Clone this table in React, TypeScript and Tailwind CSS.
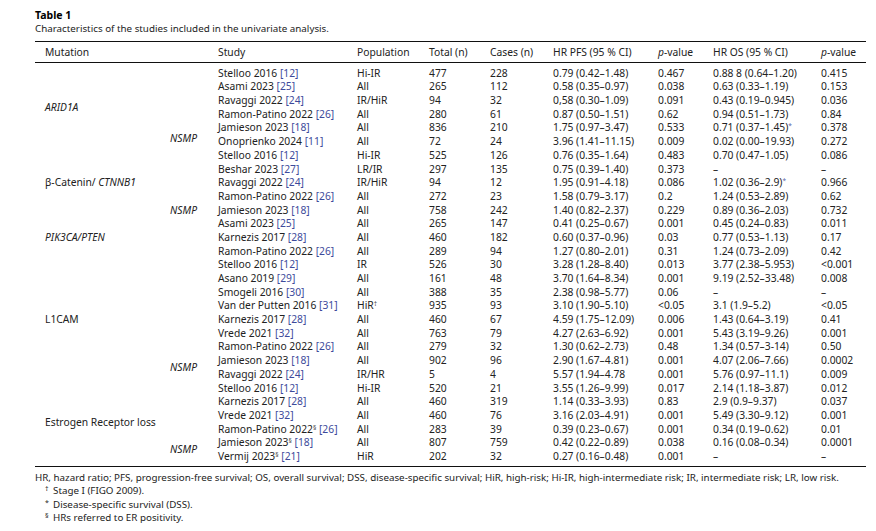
import React from "react";

type Row = {
  s: string;
  sec?: boolean;
  ref: string;
  pop: string;
  dag?: boolean;
  tot: string;
  cas: string;
  pfs: string;
  p1: string;
  os: string;
  star?: boolean;
  p2: string;
};

const rows: Row[] = [
  { s: "Stelloo 2016", ref: "12", pop: "Hi-IR", tot: "477", cas: "228", pfs: "0.79 (0.42–1.48)", p1: "0.467", os: "0.88 8 (0.64–1.20)", p2: "0.415" },
  { s: "Asami 2023", ref: "25", pop: "All", tot: "265", cas: "112", pfs: "0.58 (0.35–0.97)", p1: "0.038", os: "0.63 (0.33–1.19)", p2: "0.153" },
  { s: "Ravaggi 2022", ref: "24", pop: "IR/HiR", tot: "94", cas: "32", pfs: "0,58 (0.30–1.09)", p1: "0.091", os: "0.43 (0.19–0.945)", p2: "0.036" },
  { s: "Ramon-Patino 2022", ref: "26", pop: "All", tot: "280", cas: "61", pfs: "0.87 (0.50–1.51)", p1: "0.62", os: "0.94 (0.51–1.73)", p2: "0.84" },
  { s: "Jamieson 2023", ref: "18", pop: "All", tot: "836", cas: "210", pfs: "1.75 (0.97–3.47)", p1: "0.533", os: "0.71 (0.37–1.45)", star: true, p2: "0.378" },
  { s: "Onoprienko 2024", ref: "11", pop: "All", tot: "72", cas: "24", pfs: "3.96 (1.41–11.15)", p1: "0.009", os: "0.02 (0.00–19.93)", p2: "0.272" },
  { s: "Stelloo 2016", ref: "12", pop: "Hi-IR", tot: "525", cas: "126", pfs: "0.76 (0.35–1.64)", p1: "0.483", os: "0.70 (0.47–1.05)", p2: "0.086" },
  { s: "Beshar 2023", ref: "27", pop: "LR/IR", tot: "297", cas: "135", pfs: "0.75 (0.39–1.40)", p1: "0.373", os: "–", p2: "–" },
  { s: "Ravaggi 2022", ref: "24", pop: "IR/HiR", tot: "94", cas: "12", pfs: "1.95 (0.91–4.18)", p1: "0.086", os: "1.02 (0.36–2.9)", star: true, p2: "0.966" },
  { s: "Ramon-Patino 2022", ref: "26", pop: "All", tot: "272", cas: "23", pfs: "1.58 (0.79–3.17)", p1: "0.2", os: "1.24 (0.53–2.89)", p2: "0.62" },
  { s: "Jamieson 2023", ref: "18", pop: "All", tot: "758", cas: "242", pfs: "1.40 (0.82–2.37)", p1: "0.229", os: "0.89 (0.36–2.03)", p2: "0.732" },
  { s: "Asami 2023", ref: "25", pop: "All", tot: "265", cas: "147", pfs: "0.41 (0.25–0.67)", p1: "0.001", os: "0.45 (0.24–0.83)", p2: "0.011" },
  { s: "Karnezis 2017", ref: "28", pop: "All", tot: "460", cas: "182", pfs: "0.60 (0.37–0.96)", p1: "0.03", os: "0.77 (0.53–1.13)", p2: "0.17" },
  { s: "Ramon-Patino 2022", ref: "26", pop: "All", tot: "289", cas: "94", pfs: "1.27 (0.80–2.01)", p1: "0.31", os: "1.24 (0.73–2.09)", p2: "0.42" },
  { s: "Stelloo 2016", ref: "12", pop: "IR", tot: "526", cas: "30", pfs: "3.28 (1.28–8.40)", p1: "0.013", os: "3.77 (2.38–5.953)", p2: "<0.001" },
  { s: "Asano 2019", ref: "29", pop: "All", tot: "161", cas: "48", pfs: "3.70 (1.64–8.34)", p1: "0.001", os: "9.19 (2.52–33.48)", p2: "0.008" },
  { s: "Smogeli 2016", ref: "30", pop: "All", tot: "388", cas: "35", pfs: "2.38 (0.98–5.77)", p1: "0.06", os: "–", p2: "–" },
  { s: "Van der Putten 2016", ref: "31", pop: "HiR", dag: true, tot: "935", cas: "93", pfs: "3.10 (1.90–5.10)", p1: "<0.05", os: "3.1 (1.9–5.2)", p2: "<0.05" },
  { s: "Karnezis 2017", ref: "28", pop: "All", tot: "460", cas: "67", pfs: "4.59 (1.75–12.09)", p1: "0.006", os: "1.43 (0.64–3.19)", p2: "0.41" },
  { s: "Vrede 2021", ref: "32", pop: "All", tot: "763", cas: "79", pfs: "4.27 (2.63–6.92)", p1: "0.001", os: "5.43 (3.19–9.26)", p2: "0.001" },
  { s: "Ramon-Patino 2022", ref: "26", pop: "All", tot: "279", cas: "32", pfs: "1.30 (0.62–2.73)", p1: "0.48", os: "1.34 (0.57–3-14)", p2: "0.50" },
  { s: "Jamieson 2023", ref: "18", pop: "All", tot: "902", cas: "96", pfs: "2.90 (1.67–4.81)", p1: "0.001", os: "4.07 (2.06–7.66)", p2: "0.0002" },
  { s: "Ravaggi 2022", ref: "24", pop: "IR/HR", tot: "5", cas: "4", pfs: "5.57 (1.94–4.78", p1: "0.001", os: "5.76 (0.97–11.1)", p2: "0.009" },
  { s: "Stelloo 2016", ref: "12", pop: "Hi-IR", tot: "520", cas: "21", pfs: "3.55 (1.26–9.99)", p1: "0.017", os: "2.14 (1.18–3.87)", p2: "0.012" },
  { s: "Karnezis 2017", ref: "28", pop: "All", tot: "460", cas: "319", pfs: "1.14 (0.33–3.93)", p1: "0.83", os: "2.9 (0.9–9.37)", p2: "0.037" },
  { s: "Vrede 2021", ref: "32", pop: "All", tot: "460", cas: "76", pfs: "3.16 (2.03–4.91)", p1: "0.001", os: "5.49 (3.30–9.12)", p2: "0.001" },
  { s: "Ramon-Patino 2022", sec: true, ref: "26", pop: "All", tot: "283", cas: "39", pfs: "0.39 (0.23–0.67)", p1: "0.001", os: "0.34 (0.19–0.62)", p2: "0.01" },
  { s: "Jamieson 2023", sec: true, ref: "18", pop: "All", tot: "807", cas: "759", pfs: "0.42 (0.22–0.89)", p1: "0.038", os: "0.16 (0.08–0.34)", p2: "0.0001" },
  { s: "Vermij 2023", sec: true, ref: "21", pop: "HiR", tot: "202", cas: "32", pfs: "0.27 (0.16–0.48)", p1: "0.001", os: "–", p2: "–" },
];

const Sup = ({ children, blue }: { children: React.ReactNode; blue?: boolean }) => (
  <span className={`text-[6.5px] leading-none align-[3px] ${blue ? "text-[#5a5fa8]" : "text-[#444]"}`}>{children}</span>
);

export default function App() {
  return (
    <div
      className="w-[876px] h-[531px] bg-white text-[#222] pl-[35px] pr-[10px] pt-[8px] overflow-hidden"
      style={{ fontFamily: '"Noto Sans", "Open Sans", sans-serif' }}
    >
      <div className="h-[14px] leading-[14px] text-[10.5px] font-bold text-black">Table 1</div>
      <div className="h-[14px] leading-[14px] text-[9.8px]">Characteristics of the studies included in the univariate analysis.</div>

      <div className="mt-[5px] border-t border-[#111] border-b border-b-[#111]">
        <div className="flex h-[20px] items-center text-[10.3px] leading-none">
          <div className="w-[183px] pl-[10px]">Mutation</div>
          <div className="w-[139px]">Study</div>
          <div className="w-[72px]">Population</div>
          <div className="w-[61px]">Total (n)</div>
          <div className="w-[63px]">Cases (n)</div>
          <div className="w-[105px]">HR PFS (95 % CI)</div>
          <div className="w-[55px]"><i>p</i>-value</div>
          <div className="w-[108px]">HR OS (95 % CI)</div>
          <div className="w-[45px]"><i>p</i>-value</div>
        </div>
      </div>

      <div className="flex pt-[3px] pb-[3px] border-b border-[#111] text-[10.3px]">
        <div className="w-[183px] grid grid-rows-[repeat(29,13.7px)] grid-cols-[135px_48px]">
          <div className="row-[1/7] col-[1/2] self-center pl-[10px] italic leading-none">ARID1A</div>
          <div className="row-[5/7] col-[2/3] self-center pt-[7px] italic leading-none">NSMP</div>
          <div className="row-[7/12] col-[1/2] self-center pl-[10px] leading-none">β-Catenin/ <i>CTNNB1</i></div>
          <div className="row-[11/12] col-[2/3] self-center italic leading-none">NSMP</div>
          <div className="row-[12/15] col-[1/2] self-center pl-[10px] italic leading-none">PIK3CA/PTEN</div>
          <div className="row-[15/24] col-[1/2] self-center pl-[10px] leading-none">L1CAM</div>
          <div className="row-[22/24] col-[2/3] self-center italic leading-none">NSMP</div>
          <div className="row-[24/30] col-[1/2] self-center pl-[10px] leading-none">Estrogen Receptor loss</div>
          <div className="row-[28/30] col-[2/3] self-center italic leading-none">NSMP</div>
        </div>
        <div className="flex flex-col">
          {rows.map((r, i) => (
            <div key={i} className="flex h-[13.7px] items-center leading-none whitespace-nowrap">
              <div className="w-[139px]">
                {r.s}
                {r.sec && <Sup>§</Sup>} <span className="text-[#3d4a9b]">[{r.ref}]</span>
              </div>
              <div className="w-[72px]">
                {r.pop}
                {r.dag && <Sup>†</Sup>}
              </div>
              <div className="w-[61px]">{r.tot}</div>
              <div className="w-[63px]">{r.cas}</div>
              <div className="w-[105px]">{r.pfs}</div>
              <div className="w-[55px]">{r.p1}</div>
              <div className="w-[108px]">
                {r.os}
                {r.star && <Sup blue>*</Sup>}
              </div>
              <div className="w-[45px]">{r.p2}</div>
            </div>
          ))}
        </div>
      </div>

      <div className="mt-[4px] text-[9.8px] leading-[13.5px]">
        <div>HR, hazard ratio; PFS, progression-free survival; OS, overall survival; DSS, disease-specific survival; HiR, high-risk; Hi-IR, high-intermediate risk; IR, intermediate risk; LR, low risk.</div>
        <div className="flex pl-[10px]">
          <span className="w-[8px] text-[7px] leading-[10px]">†</span>
          <span>Stage I (FIGO 2009).</span>
        </div>
        <div className="flex pl-[10px]">
          <span className="w-[8px] text-[7px] leading-[10px]">*</span>
          <span>Disease-specific survival (DSS).</span>
        </div>
        <div className="flex pl-[10px]">
          <span className="w-[8px] text-[7px] leading-[10px]">§</span>
          <span>HRs referred to ER positivity.</span>
        </div>
      </div>
    </div>
  );
}
